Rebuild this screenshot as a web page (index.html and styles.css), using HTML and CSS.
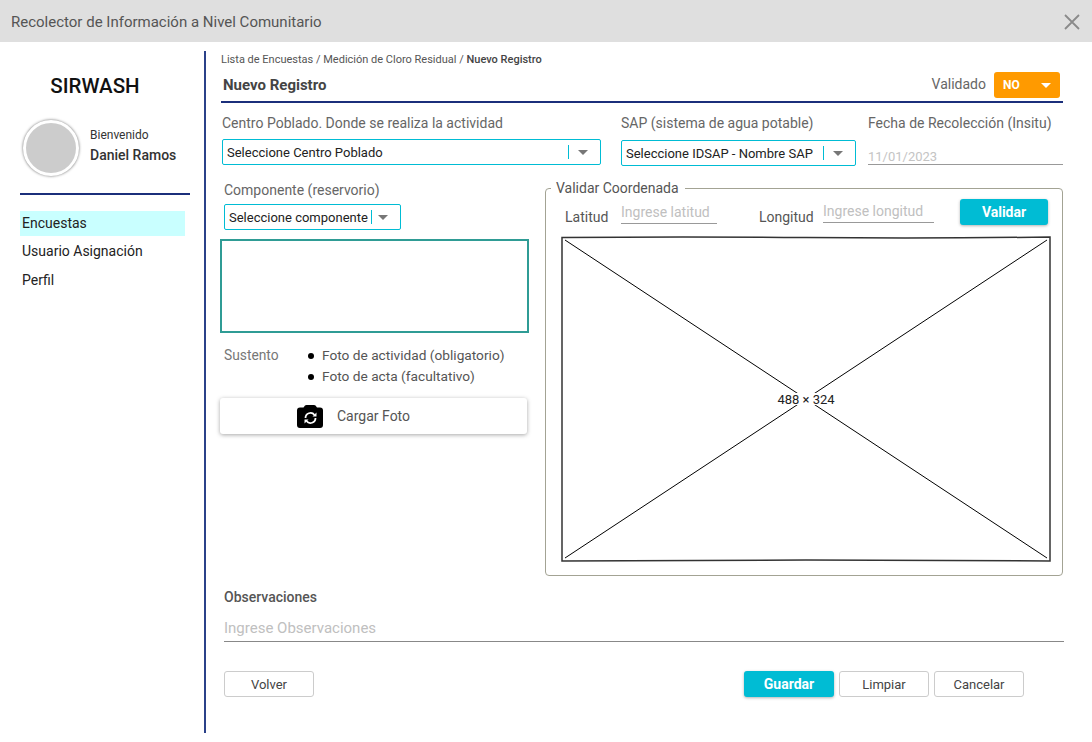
FILE: index.html
```html
<!DOCTYPE html>
<html>

<head>
  <title>Nuevo Registro</title>
  <link rel="stylesheet" href="styles.css">
</head>

<body>

  <header class="topbar">
    <span class="topbar-title">Recolector de Información a Nivel Comunitario</span>
    <svg class="close-icon" width="16" height="16" viewBox="0 0 16 16">
      <path d="M1 1L15 15M15 1L1 15" stroke="#8a8a8a" stroke-width="1.8" fill="none" />
    </svg>
  </header>

  <div class="shell">
    <aside class="sidebar">
      <h1 class="brand">SIRWASH</h1>
      <div class="user">
        <div class="avatar"></div>
        <div class="user-text">
          <div class="welcome">Bienvenido</div>
          <div class="user-name">Daniel Ramos</div>
        </div>
      </div>
      <nav class="menu">
        <a class="menu-item active">Encuestas</a>
        <a class="menu-item">Usuario Asignación</a>
        <a class="menu-item">Perfil</a>
      </nav>
    </aside>

    <main class="content">
      <div class="breadcrumb">Lista de Encuestas / Medición de Cloro Residual / <b>Nuevo Registro</b></div>

      <div class="title-row">
        <h2 class="page-title">Nuevo Registro</h2>
        <div class="validado">
          <span class="validado-label">Validado</span>
          <div class="status-btn">NO<i class="caret caret-white"></i></div>
        </div>
      </div>

      <div class="fields-row">
        <div class="field field-centro">
          <label class="field-label">Centro Poblado. Donde se realiza la actividad</label>
          <div class="combo">
            <span class="combo-text">Seleccione Centro Poblado</span>
            <i class="combo-sep"></i><i class="caret"></i>
          </div>
        </div>
        <div class="field field-sap">
          <label class="field-label">SAP (sistema de agua potable)</label>
          <div class="combo">
            <span class="combo-text">Seleccione IDSAP - Nombre SAP</span>
            <i class="combo-sep"></i><i class="caret"></i>
          </div>
        </div>
        <div class="field field-fecha">
          <label class="field-label">Fecha de Recolección (Insitu)</label>
          <div class="date-input">11/01/2023</div>
        </div>
      </div>

      <div class="columns">
        <div class="left-col">
          <label class="field-label comp-label">Componente (reservorio)</label>
          <div class="combo combo-comp">
            <span class="combo-text">Seleccione componente</span>
            <i class="combo-sep"></i><i class="caret"></i>
          </div>
          <div class="text-box"></div>
          <div class="sustento">
            <span class="sustento-label">Sustento</span>
            <ul class="sustento-list">
              <li>Foto de actividad (obligatorio)</li>
              <li>Foto de acta (facultativo)</li>
            </ul>
          </div>
          <button class="upload-btn">
            <svg class="camera-icon" width="26" height="24" viewBox="0 0 26 24">
              <path d="M3 3.500H6.500L8 1.500Q8.500 1 9.500 1H17Q18 1 18.500 1.500L20 3.500H23Q26 3.500 26 6.500V21Q26 24 23 24H3Q0 24 0 21V6.500Q0 3.500 3 3.500Z" fill="#000" />
              <path d="M8.500 14A5 5 0 0 1 17.500 11M18.500 14A5 5 0 0 1 9.500 17" stroke="#fff" stroke-width="1.800" fill="none" />
              <path d="M19.500 8.500V12.500H15.500ZM7.500 19.500V15.500H11.500Z" fill="#fff" />
            </svg>
            <span>Cargar Foto</span>
          </button>
        </div>

        <fieldset class="coord-box">
          <legend class="coord-legend">Validar Coordenada</legend>
          <div class="coord-row">
            <span class="coord-label lat-label">Latitud</span>
            <span class="coord-input lat-input">Ingrese latitud</span>
            <span class="coord-label lon-label">Longitud</span>
            <span class="coord-input lon-input">Ingrese longitud</span>
            <button class="btn btn-primary btn-validar">Validar</button>
          </div>
          <svg class="map-placeholder" width="490" height="326" viewBox="0 0 490 326">
            <path d="M1 1.500Q120 .5 245 1.500T489 1V325Q370 324 245 324T1 325Z" fill="#fff" stroke="#333" stroke-width="1.500" />
            <path d="M4 4L486 322M486 4L4 322" stroke="#000" stroke-width="1" fill="none" />
            <rect x="234" y="157" width="24" height="12" fill="#fff" />
            <text class="map-text" x="245" y="168" text-anchor="middle">488 × 324</text>
          </svg>
        </fieldset>
      </div>

      <div class="obs">
        <label class="obs-label">Observaciones</label>
        <div class="obs-input">Ingrese Observaciones</div>
      </div>

      <div class="actions">
        <button class="btn btn-outline">Volver</button>
        <div class="actions-right">
          <button class="btn btn-primary">Guardar</button>
          <button class="btn btn-outline">Limpiar</button>
          <button class="btn btn-outline">Cancelar</button>
        </div>
      </div>
    </main>
  </div>

</body>

</html>
```

FILE: styles.css
```css
* {
  box-sizing: border-box;
}

body {
  margin: 0;
  width: 1092px;
  height: 742px;
  overflow: hidden;
  background: #fff;
  font-family: Roboto, sans-serif;
  font-size: 14px;
  color: #555;
}

.topbar {
  height: 42px;
  background: #dfdfdf;
  display: flex;
  align-items: center;
  justify-content: space-between;
  padding: 1px 12px 0 11px;
}

.topbar-title {
  font-size: 15px;
  color: #555;
}

.shell {
  display: flex;
  padding-top: 9px;
}

/* sidebar */
.sidebar {
  width: 204px;
  padding: 23px 14px 0 20px;
}

.brand {
  margin: 0 0 22px;
  padding-right: 20px;
  font-size: 20.500px;
  font-weight: 500;
  line-height: 24px;
  color: #111;
  text-align: center;
}

.user {
  display: flex;
  align-items: center;
  gap: 11px;
  padding: 0 0 17px 3px;
  border-bottom: 2px solid #1b2f7b;
}

.user-text {
  padding-bottom: 6px;
}

.avatar {
  width: 56px;
  height: 56px;
  border-radius: 50%;
  background: #ccc;
  border: 3px solid #fff;
  box-shadow: 0 0 3px rgba(0, 0, 0, 0.6);
}

.welcome {
  font-size: 12px;
  line-height: 16px;
  color: #333;
  margin-bottom: 3px;
}

.user-name {
  font-weight: 500;
  line-height: 18px;
  color: #333;
}

.menu {
  display: flex;
  flex-direction: column;
  margin-top: 16px;
}

.menu-item {
  height: 25px;
  line-height: 25px;
  padding-left: 2px;
  margin-right: 5px;
  margin-bottom: 4px;
  color: #222;
}

.menu-item.active {
  background: #c9ffff;
  margin-bottom: 3px;
}

/* main */
.content {
  width: 859px;
  height: 682px;
  border-left: 2px solid #2b4189;
  padding: 0 0 0 15px;
}

.breadcrumb {
  font-size: 11px;
  line-height: 14px;
  color: #555;
  margin-top: 2px;
}

.breadcrumb b {
  font-weight: 500;
  color: #444;
}

.title-row {
  height: 36px;
  display: flex;
  justify-content: space-between;
  align-items: center;
  border-bottom: 2px solid #1b2f7b;
  padding: 2px 3px 0 2px;
}

.page-title {
  margin: 0;
  font-size: 15px;
  font-weight: 700;
  color: #444;
}

.validado {
  display: flex;
  align-items: center;
  gap: 8px;
  font-size: 14px;
  color: #666;
}

.validado-label {
  margin-bottom: 2px;
}

.status-btn {
  width: 66px;
  height: 26px;
  background: #ff9a00;
  border-radius: 3px;
  color: #fff;
  font-size: 12px;
  font-weight: 700;
  display: flex;
  align-items: center;
  justify-content: space-between;
  padding: 0 9px;
}

.caret {
  display: block;
  width: 0;
  height: 0;
  border-left: 5px solid transparent;
  border-right: 5px solid transparent;
  border-top: 5px solid #777;
}

.caret-white {
  border-top-color: #fff;
}

.fields-row {
  display: flex;
  margin-top: 11px;
  padding-left: 1px;
}

.field-label {
  display: block;
  font-size: 14px;
  line-height: 18px;
  color: #666;
}

.field .combo {
  margin-top: 7px;
}

.field-centro {
  width: 379px;
  margin-right: 20px;
}

.field-sap {
  width: 235px;
  margin-right: 12px;
}

.field-sap .combo {
  margin-top: 8px;
}

.field-fecha {
  width: 195px;
}

.combo {
  height: 26px;
  border: 1px solid #00bcd4;
  border-radius: 2px;
  display: flex;
  align-items: center;
  padding: 0 12px 0 4px;
  font-size: 13px;
  color: #222;
}

.combo-text {
  flex: 1;
  white-space: nowrap;
}

.combo-sep {
  width: 1px;
  height: 14px;
  background: #00bcd4;
  margin-right: 9px;
}

.date-input {
  height: 25px;
  margin-top: 8px;
  border-bottom: 1px solid #999;
  font-size: 13px;
  line-height: 33px;
  color: #c4c4c4;
}

.columns {
  display: flex;
  margin-top: 15px;
  margin-left: -1px;
}

.left-col {
  width: 324px;
  flex: none;
}

.comp-label {
  margin-left: 4px;
}

.combo-comp {
  width: 177px;
  margin: 5px 0 9px 4px;
  padding-right: 12px;
}

.combo-comp .combo-sep {
  margin-right: 6px;
}

.text-box {
  width: 309px;
  height: 94px;
  border: 2px solid #2f9c95;
}

.sustento {
  display: flex;
  margin-top: 12px;
  padding-left: 4px;
}

.sustento-label {
  width: 55px;
  line-height: 21px;
  color: #777;
  font-size: 13.800px;
}

.sustento-list {
  margin: 0;
  padding: 0 0 0 29px;
  list-style: none;
  font-size: 13.700px;
  line-height: 21px;
  color: #555;
}

.sustento-list li {
  display: flex;
  align-items: center;
}

.sustento-list li::before {
  content: '';
  width: 6px;
  height: 6px;
  margin-right: 8px;
  border-radius: 50%;
  background: #000;
}

.upload-btn {
  width: 307px;
  height: 36px;
  margin-top: 11px;
  border: none;
  border-radius: 3px;
  background: #fff;
  box-shadow: 0 1px 4px rgba(0, 0, 0, 0.35);
  display: flex;
  align-items: center;
  padding: 0 0 0 77px;
  font-family: Roboto, sans-serif;
  font-size: 14px;
  color: #555;
}

.camera-icon {
  margin-right: 14px;
}

.coord-box {
  width: 518px;
  height: 396px;
  margin: -1px 0 0 1px;
  padding: 0 11px 0 15px;
  border: 1px solid #a3a394;
  border-radius: 4px;
  min-width: 0;
}

.coord-legend {
  padding: 0 6px 0 5px;
  margin-left: -10px;
  font-size: 14px;
  line-height: 16px;
  color: #555;
}

.coord-row {
  height: 32px;
  display: flex;
  align-items: flex-start;
  margin-top: 3px;
  margin-bottom: 5px;
}

.coord-label {
  font-weight: 400;
  line-height: 18px;
  margin-top: 9px;
  color: #555;
}

.lat-label {
  width: 60px;
  padding-left: 4px;
}

.lon-label {
  width: 64px;
}

.coord-input {
  font-size: 14px;
  border-bottom: 1px solid #999;
  color: #c0c0c0;
}

.lat-input {
  width: 96px;
  height: 25px;
  line-height: 26px;
  margin-right: 42px;
}

.lon-input {
  width: 111px;
  height: 24px;
  line-height: 24px;
  margin-right: 26px;
}

.btn {
  width: 90px;
  height: 26px;
  border-radius: 3px;
  font-family: Roboto, sans-serif;
  font-size: 13px;
  padding: 0;
}

.btn-primary {
  border: none;
  background: #00bcd4;
  color: #fff;
  font-size: 14px;
  font-weight: 700;
  box-shadow: 0 1px 3px rgba(0, 0, 0, 0.3);
}

.btn-validar {
  width: 88px;
}

.btn-outline {
  border: 1px solid #ccc;
  background: #fff;
  color: #444;
}

.map-placeholder {
  display: block;
}

.map-text {
  font-family: Roboto, sans-serif;
  font-size: 13px;
  fill: #222;
}

.obs {
  margin: 12px -1px 0 0;
  padding-left: 3px;
}

.obs-label {
  display: block;
  line-height: 18px;
  color: #555;
  font-weight: 500;
  font-size: 14px;
}

.obs-input {
  height: 36px;
  padding-top: 13px;
  border-bottom: 1px solid #888;
  color: #c0c0c0;
  font-size: 15px;
  line-height: 18px;
}

.actions {
  display: flex;
  justify-content: space-between;
  margin-top: 29px;
  padding: 0 39px 0 3px;
}

.actions-right {
  display: flex;
  gap: 5px;
}
```
